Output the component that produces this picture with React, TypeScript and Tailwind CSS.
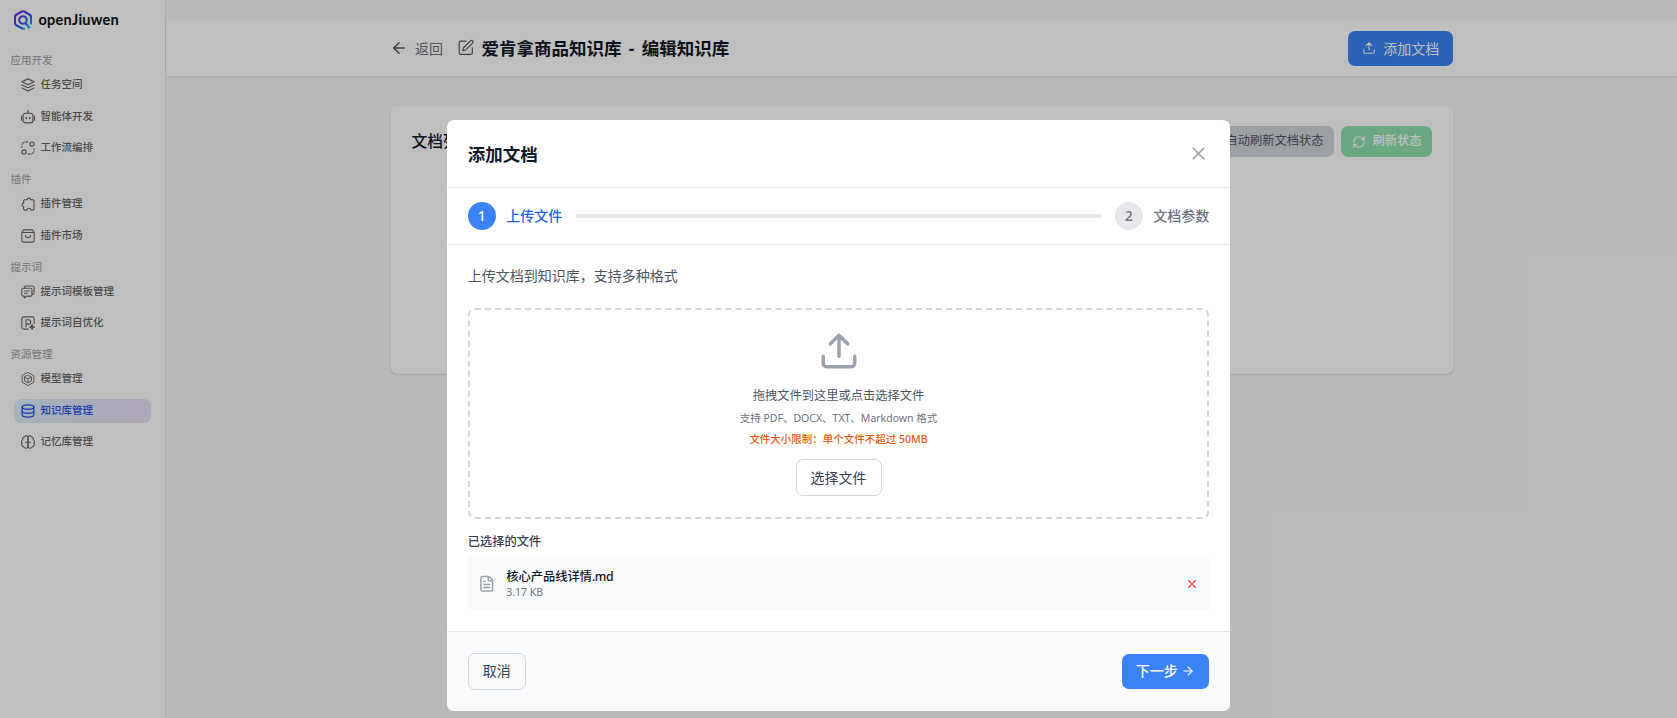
import React from 'react';
import { ArrowLeft, ArrowRight, FileText, RefreshCw, SquarePen, X } from 'lucide-react';

type IconProps = { className?: string };

const Svg = ({ className, children, sw = 1.7 }: IconProps & { children: React.ReactNode; sw?: number }) => (
  <svg
    className={className}
    viewBox="0 0 24 24"
    fill="none"
    stroke="currentColor"
    strokeWidth={sw}
    strokeLinecap="round"
    strokeLinejoin="round"
  >
    {children}
  </svg>
);

const UploadIcon = ({ className }: IconProps) => (
  <Svg className={className} sw={2}>
    <path d="M21 15v4a2 2 0 0 1-2 2H5a2 2 0 0 1-2-2v-4" />
    <path d="M17 8l-5-5-5 5M12 3v12" />
  </Svg>
);

const icons: Record<string, React.ReactNode> = {
  layers: (
    <>
      <path d="M12 1.5 22.5 6.5 12 11.5 1.5 6.5z" />
      <path d="M1.5 11.8l10.5 5 10.5-5" />
      <path d="M1.5 17l10.5 5.4 10.5-5.4" />
    </>
  ),
  bot: (
    <>
      <rect x="3.6" y="5.5" width="16.8" height="16.5" rx="4" />
      <path d="M12 .8V5M.8 10.5v7M23.2 10.5v7" strokeWidth="2.2" />
      <path d="M9 12.8v1.6M15 12.8v1.6" strokeWidth="2.8" />
    </>
  ),
  flow: (
    <>
      <circle cx="18.8" cy="5.2" r="3.6" />
      <circle cx="5.2" cy="18.8" r="3.6" />
      <path d="M1.5 11V8.500M1.800 5.800A5.500 5.500 0 0 1 6 1.700M8.500 1.500H11.500" />
      <path d="M22.500 13v2.500M22.200 18.200a5.500 5.500 0 0 1-4.200 4.100M15.500 22.500h-3" />
    </>
  ),
  plugin: (
    <path d="M6.5 4.800h4.200a2.900 2.900 0 1 1 5.800 0h3.500a2.200 2.200 0 0 1 2.200 2.200v13.500a2 2 0 0 1-2 2h-3.200c0-2-1.400-3.200-3.300-3.200s-3.300 1.200-3.300 3.200H6.500a2 2 0 0 1-2-2v-3.600a3.400 3.400 0 0 1 0-6.600V6.800a2 2 0 0 1 2-2z" />
  ),
  market: (
    <>
      <path d="M4.500 1.500h15L22.500 6v13.500a3 3 0 0 1-3 3h-15a3 3 0 0 1-3-3V6zM1.800 6h20.400" />
      <path d="M7.500 10.800c1 5.400 8 5.400 9 0" />
    </>
  ),
  chat: (
    <>
      <path d="M6 5V4.200A2.600 2.600 0 0 1 8.600 1.600h11.200a2.600 2.600 0 0 1 2.600 2.600v9.400a2.600 2.600 0 0 1-2.600 2.600" />
      <path d="M3.800 5.600h12.600a2.400 2.400 0 0 1 2.400 2.400v8.600a2.400 2.400 0 0 1-2.400 2.400H9.500L5.800 22.600V19h-2a2.400 2.400 0 0 1-2.400-2.400V8a2.400 2.400 0 0 1 2.400-2.400z" />
      <path d="M6 10.400h8.500M6 14.200h5" />
    </>
  ),
  prompt: (
    <>
      <path d="M12.500 22.500H4.500a3 3 0 0 1-3-3v-15a3 3 0 0 1 3-3h15a3 3 0 0 1 3 3v8.500" />
      <path d="M8.600 18.500V6.500h4.200a3.700 3.700 0 0 1 0 7.400H8.600" />
      <path d="M19 15l1.100 2.900L23 19l-2.900 1.100L19 23l-1.100-2.900L15 19l2.900-1.100z" fill="currentColor" />
    </>
  ),
  model: (
    <>
      <path d="M12 .8l10 5.600v11.200l-10 5.600-10-5.600V6.400z" strokeWidth="1.6" />
      <path d="M12 5.500l6 3.200v6.600l-6 3.200-6-3.200V8.700z" strokeWidth="1.5" />
      <path d="M12 12v6M6.500 9l5.500 3 5.500-3" strokeWidth="1.5" />
    </>
  ),
  db: (
    <>
      <ellipse cx="12" cy="5.200" rx="10" ry="3.800" />
      <path d="M2 5.200v13.400c0 2.200 4.500 4 10 4s10-1.800 10-4V5.200" />
      <path d="M2 12c0 2.200 4.500 3.800 10 3.800S22 14.200 22 12" />
    </>
  ),
  brain: (
    <>
      <path d="M12 4.500A3 3 0 0 0 6.300 3 4 4 0 0 0 3 7.900a4.600 4.600 0 0 0-1.200 6.500 4.200 4.200 0 0 0 3 5.900c1 3.200 6.400 3.500 7.200-.5z" />
      <path d="M12 4.500A3 3 0 0 1 17.700 3 4 4 0 0 1 21 7.900a4.600 4.600 0 0 1 1.200 6.500 4.200 4.200 0 0 1-3 5.900c-1 3.200-6.400 3.500-7.200-.5z" />
      <path d="M8 12.500h8" />
    </>
  ),
};

const groups = [
  {
    label: '应用开发',
    items: [
      { icon: 'layers', text: '任务空间' },
      { icon: 'bot', text: '智能体开发' },
      { icon: 'flow', text: '工作流编排' },
    ],
  },
  {
    label: '插件',
    items: [
      { icon: 'plugin', text: '插件管理' },
      { icon: 'market', text: '插件市场' },
    ],
  },
  {
    label: '提示词',
    items: [
      { icon: 'chat', text: '提示词模板管理' },
      { icon: 'prompt', text: '提示词自优化' },
    ],
  },
  {
    label: '资源管理',
    items: [
      { icon: 'model', text: '模型管理' },
      { icon: 'db', text: '知识库管理', active: true },
      { icon: 'brain', text: '记忆库管理' },
    ],
  },
];

const Logo = () => (
  <svg className="h-5 w-[18px]" viewBox="0 0 36 40" fill="none">
    <defs>
      <linearGradient id="lg" x1="4" y1="4" x2="34" y2="38" gradientUnits="userSpaceOnUse">
        <stop offset="0" stopColor="#7c22e8" />
        <stop offset="0.5" stopColor="#2f4cf0" />
        <stop offset="1" stopColor="#10c8e8" />
      </linearGradient>
    </defs>
    <g stroke="url(#lg)" strokeWidth="4.2">
      <path d="M22 37.5H17.5L4.5 30.5Q2 29 2 26.5V13.5Q2 11 4.5 9.5L15.5 3Q18 1.8 20.5 3L31.5 9.5Q34 11 34 13.5V29" />
      <circle cx="18" cy="20" r="7.5" />
      <path d="M22 25l9.5 11.5" />
    </g>
  </svg>
);

const Sidebar = () => (
  <aside className="flex w-[166px] shrink-0 flex-col border-r border-[#e5e7eb] bg-white">
    <div className="flex h-10 items-center pl-3.5">
      <Logo />
      <span className="ml-[6.5px] font-['Lato','Noto_Sans',sans-serif] text-[14.5px] leading-5 font-bold tracking-[0.26px] text-[#111]">
        openJiuwen
      </span>
    </div>
    <nav className="flex flex-col pt-[1.5px]">
      {groups.map((g) => (
        <div key={g.label} className="flex flex-col pt-[10.5px]">
          <div className="mb-[3.5px] pl-[10.5px] text-[10.5px] leading-[17.5px] text-[#999]">{g.label}</div>
          <div className="flex flex-col gap-[7px] px-3.5">
            {g.items.map((it) => (
              <div
                key={it.text}
                className={
                  'active' in it && it.active
                    ? 'flex h-[24.5px] items-center rounded-[7px] bg-linear-to-r from-[#dcf0f8] via-[#e2e5f8] to-[#eadffa] pl-[7px] text-[10.5px] font-medium text-[#2b55ea]'
                    : 'flex h-[24.5px] items-center pl-[7px] text-[10.5px] font-medium text-[#666]'
                }
              >
                <Svg className="mr-[5.5px] size-3.5" sw={'active' in it && it.active ? 2.3 : 1.9}>
                  {icons[it.icon]}
                </Svg>
                {it.text}
              </div>
            ))}
          </div>
        </div>
      ))}
    </nav>
  </aside>
);

const Page = () => (
  <main className="flex min-w-0 flex-1 flex-col bg-[#f9f9f9] pt-[19.5px]">
    <header className="border-b border-[#e5e7eb] bg-white shadow-xs">
      <div className="mx-auto flex h-14 w-[1064px] items-center pt-px pr-[0.3px] pl-[0.5px]">
        <ArrowLeft className="size-[18px] text-[#4b5563]" />
        <span className="ml-[7px] text-[14px] text-[#6b7280]">返回</span>
        <SquarePen className="ml-3.5 size-[17.5px] text-[#4b5563]" strokeWidth={1.6} />
        <h1 className="ml-[7px] text-[17.5px] font-bold whitespace-nowrap text-[#111827]">
          爱肯拿商品知识库<span className="mx-[7.3px]">-</span>编辑知识库
        </h1>
        <button className="ml-auto flex h-[35px] w-[105px] items-center justify-center gap-[7px] rounded-[7px] bg-[#3b82f6] text-[14px] text-white">
          <UploadIcon className="size-3.5" />
          添加文档
        </button>
      </div>
    </header>
    <section className="mx-auto mt-[28.5px] flex h-[269px] w-[1064px] items-start rounded-[7px] border border-[#f3f4f6] bg-white px-5 pt-[19.8px] shadow-sm">
      <h2 className="pt-[3px] pl-px text-[15.75px] leading-6 font-medium text-[#111827]">文档列表</h2>
      <button className="ml-auto h-[31.5px] rounded-[7px] bg-[#d1d5db] px-[10.5px] text-[12.25px] text-[#4b5563]">
        开启自动刷新文档状态
      </button>
      <button className="mr-[0.5px] ml-[7px] flex h-[31.5px] w-[91px] items-center justify-center gap-[7px] rounded-[7px] bg-[#22c55e] text-[12.25px] font-medium text-white opacity-50">
        <RefreshCw className="size-3.5" />
        刷新状态
      </button>
    </section>
  </main>
);

const Modal = () => (
  <div className="flex h-[590.5px] w-[783.5px] flex-col overflow-hidden rounded-[7px] bg-white">
    <div className="flex h-[67.5px] shrink-0 items-center justify-between border-b border-[#e5e7eb] px-[21px]">
      <h2 className="pt-px text-[17.5px] font-bold text-[#111827]">添加文档</h2>
      <X className="size-[21px] text-[#9ca3af]" />
    </div>
    <div className="flex h-[57px] shrink-0 items-center border-b border-[#e5e7eb] px-[21px] text-[14px] font-medium">
      <span className="flex size-7 items-center justify-center rounded-full bg-[#3b82f6] text-white">1</span>
      <span className="ml-[10.5px] text-[#2563eb]">上传文件</span>
      <span className="mx-3.5 h-[3.5px] flex-1 bg-[#e5e7eb]" />
      <span className="flex size-7 items-center justify-center rounded-full bg-[#e5e7eb] text-[#6b7280]">2</span>
      <span className="ml-[10.5px] text-[#6b7280]">文档参数</span>
    </div>
    <div className="flex flex-1 flex-col px-[21px] pt-5">
      <p className="text-[14px] leading-[21px] text-[#4b5563]">上传文档到知识库，支持多种格式</p>
      <div className="mt-[22px] flex h-[211px] flex-col items-center rounded-[7px] border-2 border-dashed border-[#d1d5db] pt-5">
        <UploadIcon className="size-[42px] text-[#9ca3af]" />
        <p className="mt-[15px] text-[12.25px] leading-[17.5px] text-[#4b5563]">拖拽文件到这里或点击选择文件</p>
        <p className="mt-[6.5px] text-[10.5px] leading-3.5 text-[#6b7280]">支持 PDF、DOCX、TXT、Markdown 格式</p>
        <p className="mt-[7px] text-[10.5px] leading-3.5 font-medium text-[#ea580c]">文件大小限制：单个文件不超过 50MB</p>
        <button className="mt-[13.5px] h-[37px] w-[86px] rounded-[7px] border border-[#d1d5db] bg-white text-[14px] text-[#374151]">
          选择文件
        </button>
      </div>
      <h3 className="mt-3.5 text-[12.25px] leading-[17.5px] font-medium text-[#374151]">已选择的文件</h3>
      <div className="mt-[7px] flex h-[52.5px] items-center rounded-[3.5px] bg-[#f9fafb] px-[10.5px]">
        <FileText className="size-[17.5px] text-[#9ca3af]" />
        <div className="ml-[10.5px] flex flex-col">
          <span className="text-[12.25px] leading-[17.5px] font-medium text-[#111827]">
            核心产品线详情<span className="tracking-[-0.5px]">.md</span>
          </span>
          <span className="text-[10.5px] leading-3.5 text-[#6b7280]">3.17 KB</span>
        </div>
        <X className="ml-auto size-3.5 text-[#ef4444]" />
      </div>
    </div>
    <div className="flex h-20 shrink-0 items-center justify-between border-t border-[#e5e7eb] bg-[#f9fafb] px-[21px]">
      <button className="h-[37px] w-[58px] rounded-[7px] border border-[#d1d5db] pb-[1.5px] text-[14px] text-[#374151]">
        取消
      </button>
      <button className="flex h-[35.5px] w-[87.5px] items-center justify-center gap-[3.5px] rounded-[7px] bg-[#3b82f6] pb-px text-[14px] font-medium text-white">
        下一步
        <ArrowRight className="size-3.5" />
      </button>
    </div>
  </div>
);

export default function App() {
  return (
    <div
      lang="zh-CN"
      className="relative flex h-[718px] w-full overflow-hidden font-['Noto_Sans','Noto_Sans_CJK_SC',sans-serif]"
    >
      <Sidebar />
      <Page />
      <div className="absolute inset-0 flex justify-center bg-black/25 pt-[120.3px]">
        <Modal />
      </div>
    </div>
  );
}
